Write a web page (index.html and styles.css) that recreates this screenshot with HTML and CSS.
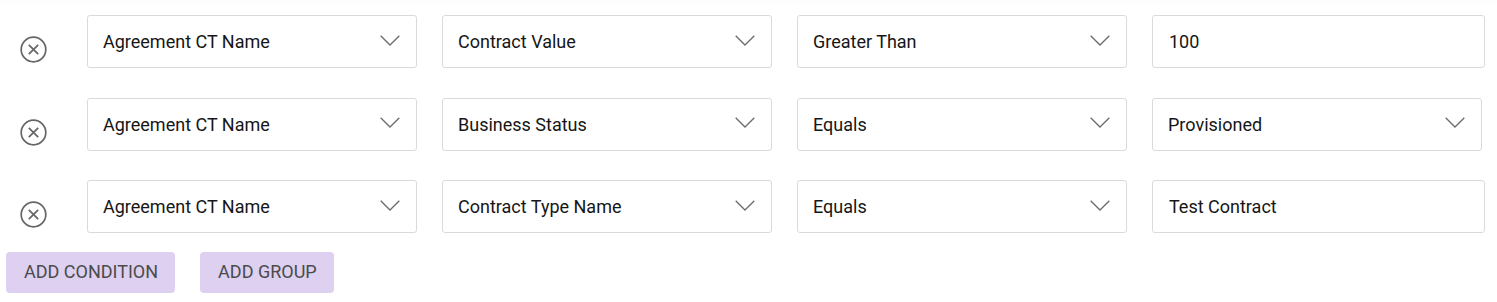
FILE: index.html
```html
<!DOCTYPE html>
<html lang="en">
<head>
    <meta charset="UTF-8">
    <meta name="viewport" content="width=device-width, initial-scale=1.0">
    <title>Query builder</title>
    <link rel="stylesheet" href="styles.css">
</head>
<body>
    <div class="topbar"></div>

    <div class="builder">
        <div class="condition">
            <button class="remove" title="Remove">
                <svg width="27" height="27" viewBox="0 0 27 27"><circle cx="13.5" cy="13.5" r="12.3"/><path d="M8.8 8.8 L18.2 18.2 M18.2 8.8 L8.8 18.2"/></svg>
            </button>
            <div class="select">Agreement CT Name
                <svg class="chevron" width="20" height="11" viewBox="0 0 20 11"><path d="M0.7 0.7 L10 10 L19.3 0.7"/></svg>
            </div>
            <div class="select">Contract Value
                <svg class="chevron" width="20" height="11" viewBox="0 0 20 11"><path d="M0.7 0.7 L10 10 L19.3 0.7"/></svg>
            </div>
            <div class="select">Greater Than
                <svg class="chevron" width="20" height="11" viewBox="0 0 20 11"><path d="M0.7 0.7 L10 10 L19.3 0.7"/></svg>
            </div>
            <input class="field" type="text" value="100">
        </div>

        <div class="condition">
            <button class="remove" title="Remove">
                <svg width="27" height="27" viewBox="0 0 27 27"><circle cx="13.5" cy="13.5" r="12.3"/><path d="M8.8 8.8 L18.2 18.2 M18.2 8.8 L8.8 18.2"/></svg>
            </button>
            <div class="select">Agreement CT Name
                <svg class="chevron" width="20" height="11" viewBox="0 0 20 11"><path d="M0.7 0.7 L10 10 L19.3 0.7"/></svg>
            </div>
            <div class="select">Business Status
                <svg class="chevron" width="20" height="11" viewBox="0 0 20 11"><path d="M0.7 0.7 L10 10 L19.3 0.7"/></svg>
            </div>
            <div class="select">Equals
                <svg class="chevron" width="20" height="11" viewBox="0 0 20 11"><path d="M0.7 0.7 L10 10 L19.3 0.7"/></svg>
            </div>
            <div class="select">Provisioned
                <svg class="chevron" width="20" height="11" viewBox="0 0 20 11"><path d="M0.7 0.7 L10 10 L19.3 0.7"/></svg>
            </div>
        </div>

        <div class="condition">
            <button class="remove" title="Remove">
                <svg width="27" height="27" viewBox="0 0 27 27"><circle cx="13.5" cy="13.5" r="12.3"/><path d="M8.8 8.8 L18.2 18.2 M18.2 8.8 L8.8 18.2"/></svg>
            </button>
            <div class="select">Agreement CT Name
                <svg class="chevron" width="20" height="11" viewBox="0 0 20 11"><path d="M0.7 0.7 L10 10 L19.3 0.7"/></svg>
            </div>
            <div class="select">Contract Type Name
                <svg class="chevron" width="20" height="11" viewBox="0 0 20 11"><path d="M0.7 0.7 L10 10 L19.3 0.7"/></svg>
            </div>
            <div class="select">Equals
                <svg class="chevron" width="20" height="11" viewBox="0 0 20 11"><path d="M0.7 0.7 L10 10 L19.3 0.7"/></svg>
            </div>
            <input class="field" type="text" value="Test Contract">
        </div>

        <div class="actions">
            <button class="action-button">ADD CONDITION</button>
            <button class="action-button">ADD GROUP</button>
        </div>
    </div>
</body>
</html>
```

FILE: styles.css
```css
body {
    margin: 0;
    background-color: #fff;
    font-family: Roboto, "Liberation Sans", sans-serif;
    color: #161616;
}
.topbar {
    height: 1px;
    margin-top: -1px;
    box-shadow: 0 1px 6px rgba(0, 0, 0, 0.09);
}
.builder {
    padding-top: 15px;
}
.condition {
    display: grid;
    grid-template-columns: 62px 330px 330px 330px 333px;
    column-gap: 25px;
    align-items: start;
    margin-bottom: 29.5px;
}
.condition:nth-last-child(2) {
    margin-bottom: 18.5px;
}
.remove {
    border: none;
    background: none;
    padding: 0;
    margin: 21px 0 0 20px;
    width: 27px;
    height: 27px;
    cursor: pointer;
}
.remove svg {
    display: block;
    fill: none;
    stroke: #666;
    stroke-width: 1.7;
}
.select, .field {
    box-sizing: border-box;
    height: 53px;
    border: 1px solid #dadada;
    border-radius: 3px;
    background-color: #fff;
    font-family: Roboto, "Liberation Sans", sans-serif;
    font-size: 18px;
    color: #161616;
}
.select {
    width: 330px;
    display: flex;
    align-items: center;
    justify-content: space-between;
    padding: 0 16px 0 15px;
}
.chevron {
    fill: none;
    stroke: #6b6b6b;
    stroke-width: 1.3;
    margin-top: -3px;
}
.field {
    width: 333px;
    padding: 0 16px;
    outline: none;
}
.actions {
    display: flex;
    gap: 25px;
    padding-left: 6px;
}
.action-button {
    height: 41px;
    padding: 0 17px 1px 18px;
    border: none;
    border-radius: 4px;
    background-color: #ddd0f0;
    color: #4b4b4b;
    font-family: Roboto, "Liberation Sans", sans-serif;
    font-size: 18px;
    cursor: pointer;
}
```
